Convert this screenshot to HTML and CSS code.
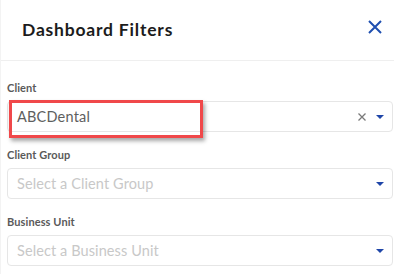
FILE: index.html
```html
<!DOCTYPE html>
<html>
<head>
<meta charset="utf-8">
<link rel="stylesheet" href="styles.css">
</head>
<body>
<div class="panel">
  <div class="header">
    <div class="title">Dashboard Filters</div>
    <svg class="close" width="14" height="14" viewBox="0 0 14 14"><path d="M1 1L13 13M13 1L1 13" stroke="#1f4fb0" stroke-width="2" fill="none"/></svg>
  </div>
  <div class="body">
    <div class="field">
      <div class="label">Client</div>
      <div class="select">
        <span class="value">ABCDental</span>
        <span class="icons">
          <svg class="clear" width="8" height="8" viewBox="0 0 8 8"><path d="M0.5 0.5L7.5 7.5M7.5 0.5L0.5 7.5" stroke="#7a7a7a" stroke-width="1.3" fill="none"/></svg>
          <span class="caret"></span>
        </span>
        <div class="highlight"></div>
      </div>
    </div>
    <div class="field">
      <div class="label">Client Group</div>
      <div class="select">
        <span class="placeholder">Select a Client Group</span>
        <span class="icons"><span class="caret"></span></span>
      </div>
    </div>
    <div class="field">
      <div class="label">Business Unit</div>
      <div class="select">
        <span class="placeholder">Select a Business Unit</span>
        <span class="icons"><span class="caret"></span></span>
      </div>
    </div>
  </div>
</div>
</body>
</html>
```
FILE: styles.css
```css
html, body { margin: 0; padding: 0; background: #fff; }
body { font-family: Lato, "Open Sans", sans-serif; width: 394px; height: 274px; overflow: hidden; }
.panel { border-left: 1px solid #f3f3f3; height: 274px; box-sizing: border-box; }
.header {
  height: 61px; box-sizing: border-box; border-bottom: 1px solid #efefef;
  display: flex; align-items: center; justify-content: space-between;
  padding: 0 12px 0 21px;
}
.title { font-size: 17.5px; font-weight: 700; color: #1c1c1c; letter-spacing: 0.8px; margin-top: -2px; }
.close { margin-top: -6px; }
.body { padding: 0 1px 0 6px; }
.field { padding-top: 20px; }
.field + .field { padding-top: 16px; }
.label { font-size: 11px; line-height: 14px; font-weight: 700; color: #5a5a5a; letter-spacing: 0.1px; }
.select {
  position: relative; margin-top: 6px; height: 31px; box-sizing: border-box;
  border: 1px solid #e6e6e6; border-radius: 4px;
  display: flex; align-items: center; justify-content: space-between;
  padding: 0 8px 0 9px;
}
.value { font-size: 14.5px; color: #5e5e5e; letter-spacing: 0.2px; }
.placeholder { font-size: 14.5px; color: #c8c8c8; letter-spacing: 0.1px; }
.icons { display: flex; align-items: center; gap: 10px; }
.caret { width: 0; height: 0; border-left: 4px solid transparent; border-right: 4px solid transparent; border-top: 4px solid #1f46a8; }
.highlight {
  position: absolute; left: 1px; top: -2px; width: 194px; height: 38px; box-sizing: border-box;
  border: 3px solid #f0484a; box-shadow: 2px 3px 4px rgba(0,0,0,0.35);
}
```
